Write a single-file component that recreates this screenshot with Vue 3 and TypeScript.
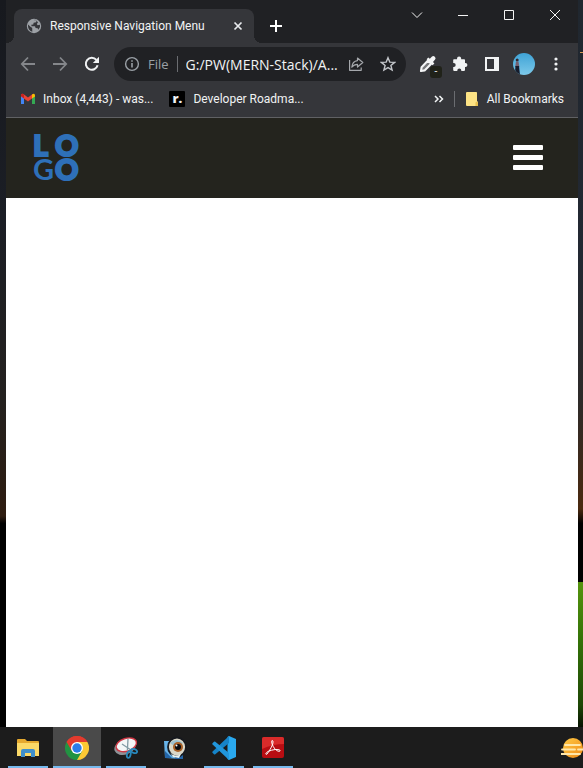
<script setup lang="ts">
import { ref } from 'vue'

interface TaskItem {
  id: string
  label: string
  open: boolean
  active?: boolean
}

const url = ref('G:/PW(MERN-Stack)/A...')

const tasks: TaskItem[] = [
  { id: 'explorer', label: 'File Explorer', open: true },
  { id: 'chrome', label: 'Chrome', open: true, active: true },
  { id: 'snip', label: 'Snipping Tool', open: true },
  { id: 'viewer', label: 'Image Viewer', open: false },
  { id: 'code', label: 'Code Editor', open: true },
  { id: 'pdf', label: 'PDF Reader', open: true },
]
</script>

<template>
  <div class="desktop">
    <div class="workspace">
      <div class="wall wall-left"></div>
      <main class="window">
        <header class="tabstrip">
          <div class="tab">
            <svg class="globe" width="16" height="16" viewBox="0 0 16 16">
              <circle cx="8" cy="8" r="7.2" fill="#9da1a6" />
              <path d="M2 6.5 5 9.3 6.2 9.7 6.3 13.8C3.8 13 2 10.8 2 8ZM7.2 2.1 10.5 2.3 10.2 4.2 7.6 4.8 7.3 6.5 5.3 6.8 5.5 8.2 9 8.3 9.6 10 11.7 10.3 12.3 11.7 14 9 13.9 6.8 11.7 7.2 10.8 6 12 4.3 9.5 1.8Z" fill="#35363a" />
            </svg>
            <span class="tab-title">Responsive Navigation Menu</span>
            <button class="tab-close" aria-label="Close tab">
              <svg width="10" height="10" viewBox="0 0 10 10"><path d="M1.5 1.5 8.5 8.5M8.5 1.5 1.5 8.5" stroke="#e8eaed" stroke-width="1.7" /></svg>
            </button>
          </div>
          <button class="new-tab" aria-label="New tab">
            <svg width="14" height="14" viewBox="0 0 14 14"><path d="M7 1V13M1 7H13" stroke="#fff" stroke-width="2" /></svg>
          </button>
          <div class="window-buttons">
            <button aria-label="Search tabs"><svg width="12" height="12" viewBox="0 0 12 12"><path d="M1 3.5 6 8.5 11 3.5" /></svg></button>
            <button aria-label="Minimize"><svg width="12" height="12" viewBox="0 0 12 12"><path d="M1 6.5H11" /></svg></button>
            <button aria-label="Maximize"><svg width="12" height="12" viewBox="0 0 12 12"><path d="M1.5 1.5H10.5V10.5H1.5Z" /></svg></button>
            <button aria-label="Close"><svg width="12" height="12" viewBox="0 0 12 12"><path d="M1 1 11 11M11 1 1 11" /></svg></button>
          </div>
        </header>

        <div class="toolbar">
          <button class="tool" aria-label="Back">
            <svg width="16" height="16" viewBox="0 0 16 16"><path d="M15 8H2M8 1.5 1.8 8 8 14.5" fill="none" stroke="#85878b" stroke-width="1.8" /></svg>
          </button>
          <button class="tool" aria-label="Forward">
            <svg width="16" height="16" viewBox="0 0 16 16"><path d="M1 8H14M8 1.5 14.2 8 8 14.5" fill="none" stroke="#85878b" stroke-width="1.8" /></svg>
          </button>
          <button class="tool" aria-label="Reload">
            <svg width="16" height="16" viewBox="0 0 16 16"><path d="M13.6 9.3A6 6 0 1 1 12.4 3.9" fill="none" stroke="#f1f3f4" stroke-width="2" /><path d="M15 .8V7H8.8Z" fill="#f1f3f4" /></svg>
          </button>
          <div class="omnibox">
            <svg class="info" width="16" height="16" viewBox="0 0 16 16"><circle cx="8" cy="8" r="6.4" fill="none" stroke="#9aa0a6" stroke-width="1.4" /><path d="M8 7V11.6M8 4.2V5.8" stroke="#9aa0a6" stroke-width="1.6" /></svg>
            <label class="scheme" for="address">File</label>
            <input id="address" v-model="url" type="text" spellcheck="false" />
            <button class="tool" aria-label="Share">
              <svg width="16" height="16" viewBox="0 0 16 16"><path d="M1.6 4V14.3H13.2V11.5M9.5 2 14.8 6.5 9.5 11V8.4C7 8.4 5.2 9.3 3.8 11.2 4.2 7.4 6.2 5 9.5 4.6Z" fill="none" stroke="#a5a8ac" stroke-width="1.2" stroke-linejoin="round" /></svg>
            </button>
            <button class="tool" aria-label="Bookmark this tab">
              <svg width="16" height="16" viewBox="0 0 16 16"><path d="M8 1.7 9.8 6.1 14.6 6.4 10.9 9.5 12.1 14.1 8 11.6 3.9 14.1 5.1 9.5 1.4 6.4 6.2 6.1Z" fill="none" stroke="#c3c6ca" stroke-width="1.4" /></svg>
            </button>
          </div>
          <button class="tool picker" aria-label="Color picker">
            <svg width="18" height="18" viewBox="0 0 18 18"><path d="M9 5.6 12.2 8.8 5.6 15.4 2 16 2.6 12.2Z" fill="#77787b" stroke="#f4f5f6" stroke-width="2.1" stroke-linejoin="round" /><path d="M7.6 4.2 9.3 2.6 10.8 3.8 13 1.5Q14.3.3 15.8 1.7 17.3 3.2 16.1 4.6L14 6.9 15.4 8.5 13.6 10.2Z" fill="#f4f5f6" /></svg>
            <span class="badge">-</span>
          </button>
          <button class="tool" aria-label="Extensions">
            <svg width="16" height="16" viewBox="0 0 16 16"><path d="M2 3.3H5V2.7A2.1 2.1 0 0 1 9.2 2.7V3.3H12.2Q13 3.3 13 4.1V7H13.4A2 2 0 0 1 13.4 11H13V14.1Q13 14.9 12.2 14.9H9.3V14.4A2 2 0 0 0 5.3 14.4V14.9H2Q1.2 14.9 1.2 14.1V11H1.7A2 2 0 0 0 1.7 7H1.2V4.1Q1.2 3.3 2 3.3Z" fill="#f1f3f4" /></svg>
          </button>
          <button class="tool" aria-label="Side panel">
            <svg width="14" height="14" viewBox="0 0 14 14"><path d="M0 0H14V14H0ZM2 2V12H9V2Z" fill="#f1f3f4" fill-rule="evenodd" /></svg>
          </button>
          <button class="tool" aria-label="Profile">
            <svg width="22" height="22" viewBox="0 0 22 22">
              <defs>
                <linearGradient id="sky" x1="0" y1="0" x2="0" y2="1"><stop offset="0" stop-color="#3fa3d6" /><stop offset="1" stop-color="#7cc8e9" /></linearGradient>
                <clipPath id="face"><circle cx="11" cy="11" r="11" /></clipPath>
              </defs>
              <g clip-path="url(#face)"><path d="M0 0H22V22H0Z" fill="url(#sky)" /><circle cx="4.2" cy="7" r="1.5" fill="#33272f" /><path d="M3 8.5H5.5L6.4 14H2.2Z" fill="#75606f" /><path d="M2.4 13H6L7 22H2Z" fill="#171c2b" /></g>
            </svg>
          </button>
          <button class="tool" aria-label="Menu">
            <svg width="4" height="16" viewBox="0 0 4 16"><circle cx="2" cy="3" r="1.6" /><circle cx="2" cy="8" r="1.6" /><circle cx="2" cy="13" r="1.6" /></svg>
          </button>
        </div>

        <nav class="bookmarks" aria-label="Bookmarks">
          <a href="#inbox">
            <svg width="14" height="12" viewBox="0 0 14 12"><path d="M0 2V11H3V4.5Z" fill="#4285f4" /><path d="M11 4.5V11H14V2Z" fill="#34a853" /><path d="M0 1.8Q.8.2 2.4 1L7 4.6 11.6 1 11.6 5 7 8.5 0 3.2Z" fill="#ea4335" /><path d="M11 1.5Q13.4-.3 14 2.2V3.4L11 5.6Z" fill="#fbbc04" /><path d="M0 3.2V2Q.7 0 3 1.5V5.5Z" fill="#c5221f" /></svg>
            <span>Inbox (4,443) - was...</span>
          </a>
          <a href="#roadmap">
            <span class="roadmap-icon">r.</span>
            <span>Developer Roadma...</span>
          </a>
          <button class="overflow" aria-label="More bookmarks">
            <svg width="10" height="8" viewBox="0 0 10 8"><path d="M1 1 4 4 1 7M5.5 1 8.5 4 5.5 7" fill="none" stroke="#f1f3f4" stroke-width="1.5" /></svg>
          </button>
          <a class="all" href="#all">
            <svg width="12" height="14" viewBox="0 0 12 14"><path d="M0 1Q0 0 1 0H10.4Q11 0 11 1V9L12 10V13Q12 14 11 14H1Q0 14 0 13Z" fill="#fde385" /><path d="M9.5 14V10.5L11 9.4 12 10.5V14Z" fill="#e8c04f" /></svg>
            <span>All Bookmarks</span>
          </a>
        </nav>

        <section class="page">
          <nav class="site-nav">
            <a class="logo" href="#home" aria-label="Logo">
              <svg width="48" height="48" viewBox="0 0 48 48">
                <text class="heavy" x="0" y="23">L</text>
                <text class="heavy" x="22" y="23">O</text>
                <text class="medium" x="0" y="47">G</text>
                <text class="heavy" x="22" y="47">O</text>
              </svg>
            </a>
            <button class="hamburger" aria-label="Toggle menu"><i></i><i></i><i></i></button>
          </nav>
        </section>
      </main>
      <div class="wall wall-right"><span class="spark"></span></div>
    </div>

    <footer class="taskbar">
      <button
        v-for="task in tasks"
        :key="task.id"
        class="task"
        :class="{ open: task.open, active: task.active }"
        :aria-label="task.label"
      >
        <svg v-if="task.id === 'explorer'" width="24" height="24" viewBox="0 0 24 24">
          <path d="M1 4Q1 3 2 3H9L11 5H22Q23 5 23 6V20H1Z" fill="#e5a92f" /><path d="M1 7H23V20H1Z" fill="#fbd968" /><path d="M5 21V15Q5 13 7 13H17Q19 13 19 15V21H15V17H9V21Z" fill="#3f8fcb" />
        </svg>
        <svg v-else-if="task.id === 'chrome'" width="24" height="24" viewBox="0 0 24 24">
          <path d="M12 12 1.6 6A12 12 0 0 1 22.4 6Z" fill="#e33b2e" /><path d="M12 12V6H22.4A12 12 0 0 1 12 24Z" fill="#fcc934" /><path d="M12 12 17.2 15 12 24A12 12 0 0 1 1.6 6Z" fill="#229342" /><path d="M1.6 6 6.8 15 12 6H22.4A12 12 0 0 0 1.6 6Z" fill="#e33b2e" /><circle cx="12" cy="12" r="6" fill="#fff" /><circle cx="12" cy="12" r="4.7" fill="#2b7de9" />
        </svg>
        <svg v-else-if="task.id === 'snip'" width="24" height="24" viewBox="0 0 24 24">
          <ellipse cx="11" cy="11" rx="11" ry="7.5" fill="#8e9297" transform="rotate(-20 11 11)" /><ellipse cx="12.3" cy="8.8" rx="10.5" ry="6.4" fill="#f3f6f7" stroke="#cf3744" stroke-width="1.4" transform="rotate(-18 12.3 8.8)" />
          <path d="M14 3 13.4 14M8 8 17 14" stroke="#819aa4" stroke-width="1.3" /><g fill="none" stroke="#2889bd" stroke-width="1.8"><ellipse cx="14.8" cy="18.5" rx="1.8" ry="3.4" transform="rotate(15 14.8 18.5)" /><ellipse cx="20" cy="15" rx="3.2" ry="1.9" transform="rotate(20 20 15)" /></g>
        </svg>
        <svg v-else-if="task.id === 'viewer'" width="24" height="24" viewBox="0 0 24 24">
          <path d="M1 5H19L20 23 2 22Z" fill="#67b3e8" /><path d="M2 15 9 22H2ZM12 19 20 16V23H12Z" fill="#2465a7" /><ellipse cx="14" cy="11" rx="9" ry="9.5" fill="#dbd8c8" stroke="#17191e" stroke-width="1.8" /><path d="M7 7Q13 1 20 7L14 12Z" fill="#9cc2d1" /><circle cx="15" cy="11" r="5" fill="#a75f25" /><circle cx="15" cy="11" r="3" fill="#080b10" /><circle cx="13.5" cy="9.5" r="1" fill="#fff" /><path d="M7 16Q11 22 18 18L16 22 10 21Z" fill="#e9f3f4" />
        </svg>
        <svg v-else-if="task.id === 'code'" width="24" height="24" viewBox="0 0 24 24">
          <path d="M17 0 24 3V21L17 24 15.5 23V1Z" fill="#2aa9ef" /><path d="M17 0V7L3.3 18.2Q2.6 18.7 2 18.2L.5 16.8Q0 16.2.6 15.6Z" fill="#1684c9" /><path d="M17 24V17L3.3 5.8Q2.6 5.3 2 5.8L.5 7.2Q0 7.8.6 8.4Z" fill="#2196db" />
        </svg>
        <svg v-else width="24" height="24" viewBox="0 0 24 24">
          <rect x="1" y="1" width="22" height="21" rx="2" fill="#b80d12" /><path d="M1 3Q1 1 3 1H21Q23 1 23 3V8Q12 8 1 13Z" fill="#d92b2a" /><path d="M11 4.5C13.4 4.5 11.7 10.5 5.8 18.3 4 18.7 4.8 16.5 7.4 15.3 11.5 13.5 17 12.8 19 14.2 20 15.8 16.5 16.1 13.8 12.8 11.5 10 10 6 11 4.5Z" fill="none" stroke="#fff" stroke-width="1" />
        </svg>
      </button>
      <button class="weather" aria-label="Weather">
        <svg width="22" height="22" viewBox="0 0 22 22">
          <defs><linearGradient id="sun" x1="0" y1="0" x2="1" y2="1"><stop offset="0" stop-color="#ffca45" /><stop offset="1" stop-color="#ef8915" /></linearGradient></defs>
          <circle cx="12" cy="11" r="10" fill="url(#sun)" /><path d="M4 8H19M1 12.5H14M17 12.5H22M0 17H19" stroke="#ffe7aa" stroke-width="1.8" stroke-linecap="round" />
        </svg>
      </button>
    </footer>
  </div>
</template>

<style>
body {
  background: #000;
}
</style>

<style scoped>
.desktop {
  display: flex;
  flex-direction: column;
  min-height: 100vh;
  font-family: Roboto, "Open Sans", sans-serif;
  font-size: 12px;
  color: #f1f3f4;
}
button {
  display: flex;
  align-items: center;
  justify-content: center;
  margin: 0;
  padding: 0;
  border: 0;
  background: none;
  color: inherit;
  font: inherit;
}
svg {
  display: block;
  flex: none;
}
a {
  color: inherit;
  text-decoration: none;
}
.workspace {
  display: grid;
  flex: 1;
  grid-template-columns: 6px minmax(0, 1fr) 5px;
}
.wall-left {
  background: linear-gradient(#17191e 0%, #1b1e25 30%, #24211f 55%, #2e1c10 71%, #000 72%);
}
.wall-right {
  position: relative;
  background: linear-gradient(#20272f 0%, #222832 35%, #2d2a29 55%, #4a290f 70%, #000 72%, #000 80%, #55940d 80%, #347307 88%, #1e4705 97%, #071202 100%);
}
.spark {
  position: absolute;
  top: 52px;
  right: 0;
  width: 3px;
  height: 1px;
  background: #d39a55;
}
.window {
  display: flex;
  flex-direction: column;
  background: #fff;
}
.tabstrip {
  display: flex;
  align-items: flex-end;
  height: 43px;
  padding-left: 8px;
  background: #202124;
}
.tab {
  position: relative;
  display: flex;
  align-items: center;
  gap: 8px;
  box-sizing: border-box;
  width: 240px;
  height: 34px;
  padding: 0 8px 0 12px;
  border-radius: 8px 8px 0 0;
  background: #35363a;
}
.tab::before,
.tab::after {
  position: absolute;
  bottom: 0;
  width: 8px;
  height: 8px;
  content: "";
}
.tab::before {
  right: 100%;
  background: radial-gradient(circle at 0 0, #202124 8px, #35363a 8px);
}
.tab::after {
  left: 100%;
  background: radial-gradient(circle at 100% 0, #202124 8px, #35363a 8px);
}
.tab-title {
  flex: 1;
  white-space: nowrap;
}
.tab-close {
  width: 16px;
  height: 16px;
}
.new-tab {
  width: 28px;
  height: 34px;
  margin-left: 8px;
}
.window-buttons {
  display: flex;
  align-self: flex-start;
  margin-left: auto;
}
.window-buttons button {
  width: 46px;
  height: 30px;
}
.window-buttons path {
  fill: none;
  stroke: #f4f4f4;
}
.toolbar {
  display: flex;
  align-items: center;
  height: 42px;
  padding: 0 6px;
  background: #35363a;
}
.tool {
  position: relative;
  flex: none;
  width: 32px;
  height: 32px;
  fill: #f1f3f4;
}
.omnibox {
  display: flex;
  flex: 1;
  align-items: center;
  min-width: 0;
  height: 34px;
  margin: 0 6px;
  padding: 0 2px 0 10px;
  box-sizing: border-box;
  border-radius: 17px;
  background: #202124;
}
.scheme {
  margin-left: 8px;
  padding-right: 8px;
  border-right: 1px solid #6b6d71;
  color: #9aa0a6;
  font-family: "Open Sans", sans-serif;
  font-size: 13px;
  line-height: 16px;
}
.omnibox input {
  flex: 1;
  min-width: 0;
  margin: 0 0 0 8px;
  padding: 0;
  border: 0;
  outline: 0;
  background: none;
  color: #f1f3f4;
  font-family: "Open Sans", sans-serif;
  font-size: 14px;
}
.badge {
  position: absolute;
  right: 2px;
  bottom: 2px;
  width: 12px;
  height: 12px;
  border-radius: 3px;
  background: #202219;
  font-size: 10px;
  line-height: 12px;
}
.bookmarks {
  display: flex;
  align-items: center;
  gap: 16px;
  box-sizing: border-box;
  height: 33px;
  padding: 0 14px 4px 15px;
  border-bottom: 1px solid #606164;
  background: #35363a;
  white-space: nowrap;
}
.bookmarks a {
  display: flex;
  align-items: center;
  gap: 8px;
  height: 28px;
}
.roadmap-icon {
  width: 16px;
  height: 16px;
  border-radius: 1px;
  background: #000;
  font-family: "Open Sans", sans-serif;
  font-size: 13px;
  font-weight: 800;
  line-height: 14px;
  text-align: center;
}
.overflow {
  margin-left: auto;
}
.bookmarks .all {
  gap: 9px;
  height: 16px;
  margin-left: -6px;
  padding-left: 11px;
  border-left: 1px solid #6b6d71;
}
.page {
  flex: 1;
}
.site-nav {
  display: flex;
  align-items: center;
  justify-content: space-between;
  box-sizing: border-box;
  height: 80px;
  padding: 0 35px 2px 27px;
  background: #24241e;
}
.logo svg {
  overflow: visible;
}
.logo text {
  fill: #2e70b9;
  font-family: Lato, sans-serif;
  font-size: 29px;
}
.logo .heavy {
  font-weight: 900;
  stroke: #2e70b9;
  stroke-width: 2px;
}
.logo .medium {
  font-weight: 700;
}
.hamburger {
  flex-direction: column;
  gap: 5px;
}
.hamburger i {
  width: 30px;
  height: 5px;
  border-radius: 1px;
  background: #fff;
}
.taskbar {
  display: flex;
  gap: 1px;
  height: 41px;
  padding-left: 4px;
  overflow: hidden;
  background: #1c1c1c;
}
.task {
  position: relative;
  width: 48px;
  height: 41px;
}
.task.active {
  background: #4a4a4a;
}
.task.open::after {
  position: absolute;
  right: 4px;
  bottom: 0;
  left: 4px;
  height: 2px;
  background: #76b9ed;
  content: "";
}
.task.active::after {
  right: 0;
  left: 0;
}
.weather {
  margin-left: auto;
}
</style>
